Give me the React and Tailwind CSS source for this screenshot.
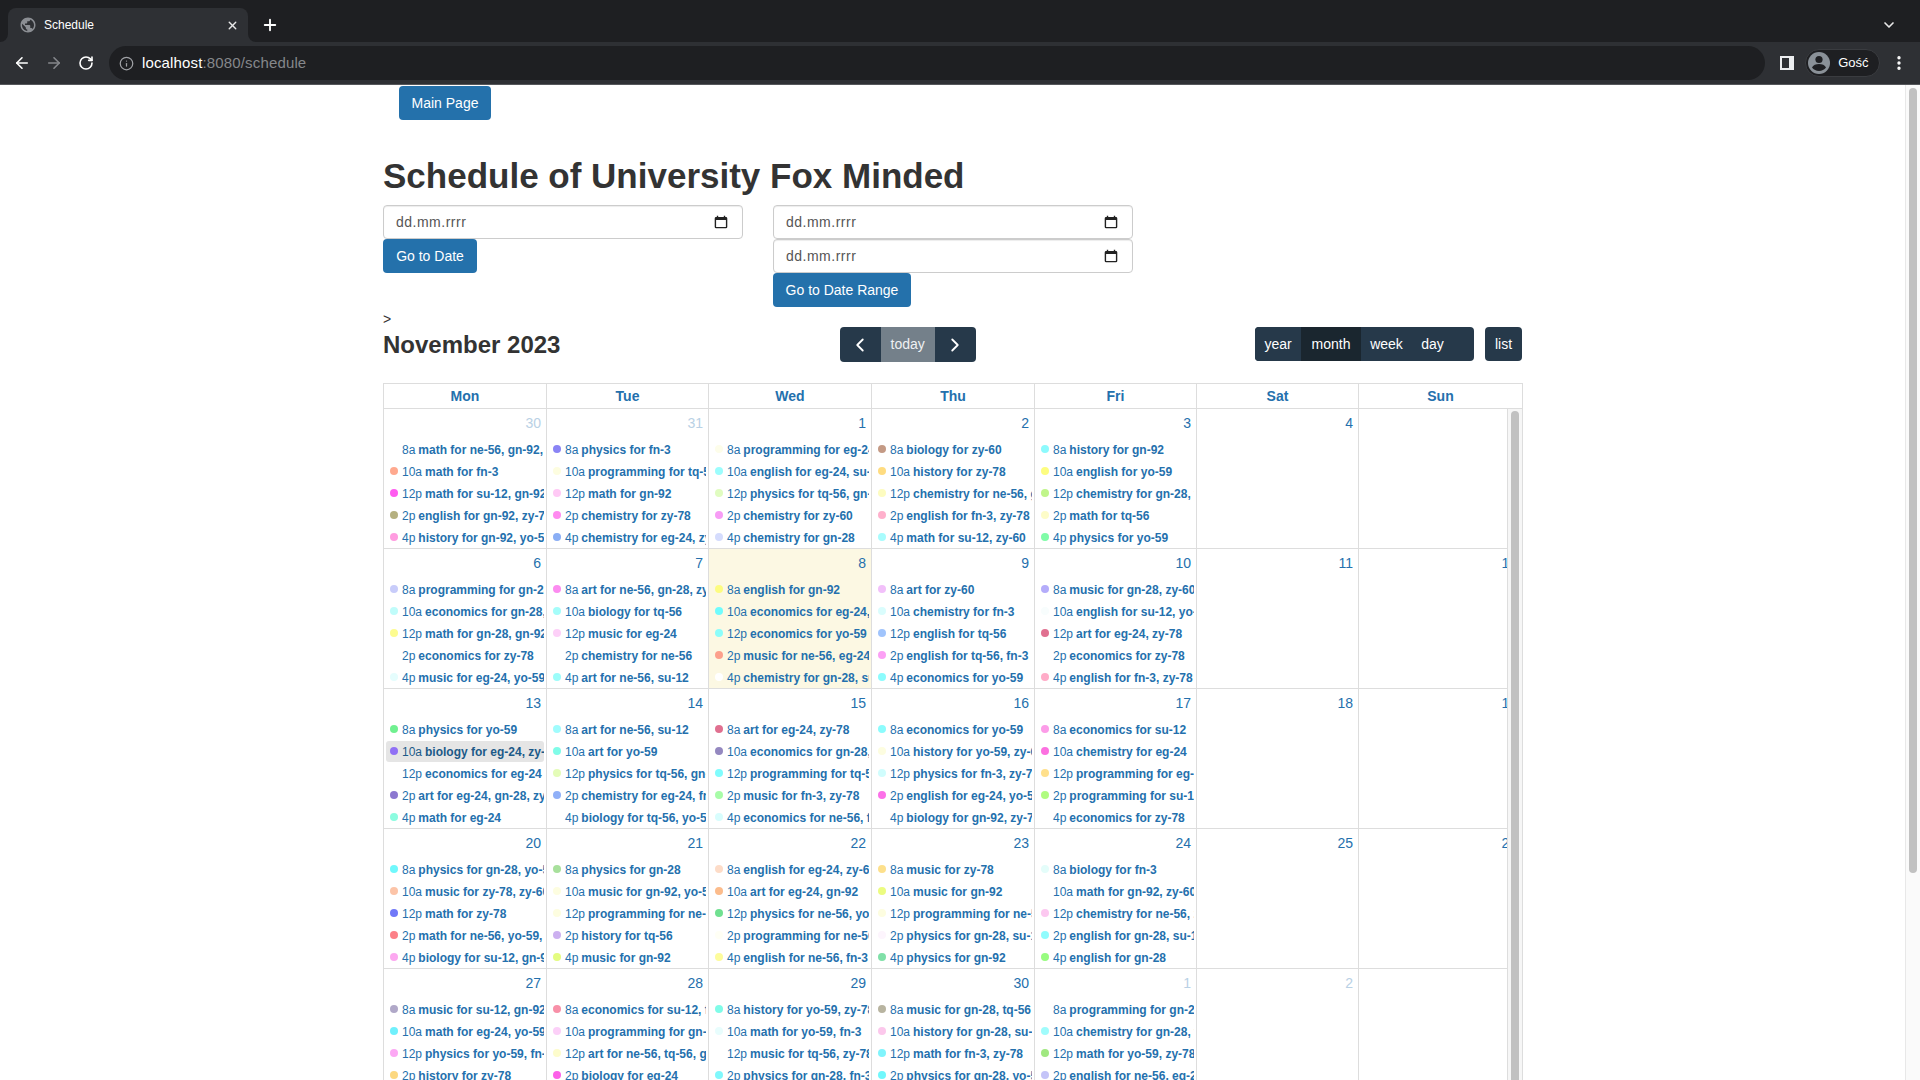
import { ArrowLeft, ArrowRight, ChevronDown, ChevronLeft, ChevronRight, EllipsisVertical, Info, Plus, RotateCw, X } from "lucide-react";
import { MdPublic } from "react-icons/md";

const TIMES = ["8a", "10a", "12p", "2p", "4p"];
const DAYS = ["Mon", "Tue", "Wed", "Thu", "Fri", "Sat", "Sun"];

// one entry per day: number, and events as [dot colour, title]
const WEEKS = [
  [
    { n: 30, muted: true, ev: [["#ffffff", "math for ne-56, gn-92, su-12"], ["#ffa98f", "math for fn-3"], ["#ff5cf0", "math for su-12, gn-92"], ["#b5b080", "english for gn-92, zy-78"], ["#ff9ce0", "history for gn-92, yo-59"]] },
    { n: 31, muted: true, ev: [["#8a84f5", "physics for fn-3"], ["#fdfde0", "programming for tq-56"], ["#ffc9f5", "math for gn-92"], ["#ff8af0", "chemistry for zy-78"], ["#8aaef5", "chemistry for eg-24, zy-78"]] },
    { n: 1, ev: [["#fdfdea", "programming for eg-24"], ["#9cfdfd", "english for eg-24, su-12"], ["#e0fcc0", "physics for tq-56, gn-28"], ["#f79cf5", "chemistry for zy-60"], ["#d5dcfd", "chemistry for gn-28"]] },
    { n: 2, ev: [["#c49a85", "biology for zy-60"], ["#ffdc80", "history for zy-78"], ["#fdfcc0", "chemistry for ne-56, gn-28"], ["#ffb0cc", "english for fn-3, zy-78"], ["#a8fcfd", "math for su-12, zy-60"]] },
    { n: 3, ev: [["#8dfafd", "history for gn-92"], ["#fdfd80", "english for yo-59"], ["#c0f58a", "chemistry for gn-28, yo-59"], ["#fdfcc8", "math for tq-56"], ["#80fca8", "physics for yo-59"]] },
    { n: 4, ev: [] },
    { n: 5, ev: [] },
  ],
  [
    { n: 6, ev: [["#c8ccfa", "programming for gn-28"], ["#c0fcfa", "economics for gn-28, su-12"], ["#fdfc90", "math for gn-28, gn-92"], ["#ffffff", "economics for zy-78"], ["#e5fdfd", "music for eg-24, yo-59"]] },
    { n: 7, ev: [["#fc8cf0", "art for ne-56, gn-28, zy-78"], ["#a5fdfa", "biology for tq-56"], ["#fdd0f8", "music for eg-24"], ["#ffffff", "chemistry for ne-56"], ["#9cfdfa", "art for ne-56, su-12"]] },
    { n: 8, today: true, ev: [["#fdfc80", "english for gn-92"], ["#70fcfd", "economics for eg-24, fn-3"], ["#8cfdfa", "economics for yo-59"], ["#fca08c", "music for ne-56, eg-24"], ["#ffffff", "chemistry for gn-28, su-12"]] },
    { n: 9, ev: [["#f2c0fa", "art for zy-60"], ["#dafdfd", "chemistry for fn-3"], ["#a0c4fc", "english for tq-56"], ["#fca0f5", "english for tq-56, fn-3"], ["#8cfcfd", "economics for yo-59"]] },
    { n: 10, ev: [["#b4acfa", "music for gn-28, zy-60"], ["#f8fdfd", "english for su-12, yo-59"], ["#e07090", "art for eg-24, zy-78"], ["#ffffff", "economics for zy-78"], ["#ffacc8", "english for fn-3, zy-78"]] },
    { n: 11, ev: [] },
    { n: 12, ev: [] },
  ],
  [
    { n: 13, ev: [["#70f090", "physics for yo-59"], ["#9070f5", "biology for eg-24, zy-78", true], ["#ffffff", "economics for eg-24"], ["#8c78d0", "art for eg-24, gn-28, zy-78"], ["#8cfce0", "math for eg-24"]] },
    { n: 14, ev: [["#a0fcfd", "art for ne-56, su-12"], ["#80fce8", "art for yo-59"], ["#e4fcb8", "physics for tq-56, gn-28"], ["#90b0f8", "chemistry for eg-24, fn-3"], ["#ffffff", "biology for tq-56, yo-59"]] },
    { n: 15, ev: [["#e07090", "art for eg-24, zy-78"], ["#9488c0", "economics for gn-28, su-12"], ["#80fcfd", "programming for tq-56"], ["#a8fca8", "music for fn-3, zy-78"], ["#d8fdfd", "economics for ne-56, fn-3"]] },
    { n: 16, ev: [["#8cfcfd", "economics for yo-59"], ["#fdfde0", "history for yo-59, zy-60"], ["#d0fdfd", "physics for fn-3, zy-78"], ["#fc70e8", "english for eg-24, yo-59"], ["#ffffff", "biology for gn-92, zy-78"]] },
    { n: 17, ev: [["#fc9ce8", "economics for su-12"], ["#fc70e0", "chemistry for eg-24"], ["#ffe08c", "programming for eg-24"], ["#b0fc80", "programming for su-12"], ["#ffffff", "economics for zy-78"]] },
    { n: 18, ev: [] },
    { n: 19, ev: [] },
  ],
  [
    { n: 20, ev: [["#70f8fc", "physics for gn-28, yo-59"], ["#fcc4a8", "music for zy-78, zy-60"], ["#7078f8", "math for zy-78"], ["#fc8088", "math for ne-56, yo-59, fn-3"], ["#fca8f0", "biology for su-12, gn-92"]] },
    { n: 21, ev: [["#a8e09c", "physics for gn-28"], ["#fdfde0", "music for gn-92, yo-59"], ["#fdfde0", "programming for ne-56"], ["#ccb0f0", "history for tq-56"], ["#e4fc80", "music for gn-92"]] },
    { n: 22, ev: [["#fddcc8", "english for eg-24, zy-60"], ["#fcbc8c", "art for eg-24, gn-92"], ["#70e090", "physics for ne-56, yo-59"], ["#fffff5", "programming for ne-56"], ["#fdfc9c", "english for ne-56, fn-3"]] },
    { n: 23, ev: [["#fde08c", "music for zy-78"], ["#ecfc80", "music for gn-92"], ["#fdfde0", "programming for ne-56"], ["#fdf5fd", "physics for gn-28, su-12"], ["#80e0a8", "physics for gn-92"]] },
    { n: 24, ev: [["#e4fdfa", "biology for fn-3"], ["#ffffff", "math for gn-92, zy-60"], ["#fcc8f0", "chemistry for ne-56, zy-78"], ["#90fcfd", "english for gn-28, su-12"], ["#98fc80", "english for gn-28"]] },
    { n: 25, ev: [] },
    { n: 26, ev: [] },
  ],
  [
    { n: 27, ev: [["#b0a8c8", "music for su-12, gn-92"], ["#70f0fc", "math for eg-24, yo-59"], ["#fca8f4", "physics for yo-59, fn-3"], ["#fcd880", "history for zy-78"]] },
    { n: 28, ev: [["#f890a8", "economics for su-12, fn-3"], ["#fcd0f8", "programming for gn-28"], ["#fdfccc", "art for ne-56, tq-56, gn-92"], ["#fc60e8", "biology for eg-24"]] },
    { n: 29, ev: [["#80fce8", "history for yo-59, zy-78"], ["#e8fdfd", "math for yo-59, fn-3"], ["#ffffff", "music for tq-56, zy-78"], ["#80f8fc", "physics for gn-28, fn-3"]] },
    { n: 30, ev: [["#b8b4a0", "music for gn-28, tq-56"], ["#fcc8ec", "history for gn-28, su-12"], ["#80f4fc", "math for fn-3, zy-78"], ["#70f8fc", "physics for gn-28, yo-59"]] },
    { n: 1, muted: true, ev: [["#ffffff", "programming for gn-28"], ["#a0fcfc", "chemistry for gn-28, fn-3"], ["#a0e880", "math for yo-59, zy-78"], ["#c4c4f8", "english for ne-56, eg-24"]] },
    { n: 2, muted: true, ev: [] },
    { n: 3, muted: true, ev: [] },
  ],
];

function BrowserChrome() {
  return (
    <div className="shrink-0 bg-[#1e1f22] text-white">
      {/* Tab strip */}
      <div className="h-[42px] flex items-end pl-[8px] pr-[23px]">
        <div className="relative w-[240px] h-[34px] bg-[#2e3034] rounded-t-[8px] flex items-center pl-[11px] pr-[9px]">
          <svg className="absolute left-[-8px] bottom-0" width="8" height="8" viewBox="0 0 8 8">
            <path d="M8 0v8H0a8 8 0 0 0 8-8z" fill="#2e3034" />
          </svg>
          <svg className="absolute right-[-8px] bottom-0" width="8" height="8" viewBox="0 0 8 8">
            <path d="M0 0v8h8a8 8 0 0 1-8-8z" fill="#2e3034" />
          </svg>
          <MdPublic size={18} className="text-[#8b8e93] shrink-0" />
          <span className="ml-[7px] text-[12px] flex-1">Schedule</span>
          <X size={13} strokeWidth={2.5} className="text-[#e8e8e8]" />
        </div>
        <Plus size={18} strokeWidth={2.5} className="ml-[13px] mb-[8px]" />
        <div className="flex-1" />
        <ChevronDown size={16} strokeWidth={2.5} className="mb-[9px] text-[#e8e8e8]" />
      </div>
      {/* Toolbar */}
      <div className="h-[43px] bg-[#2e3034] border-b border-[#55575b] flex items-center pl-[13px] pr-[12px]">
        <ArrowLeft size={18} strokeWidth={2.2} />
        <ArrowRight size={18} strokeWidth={2.2} className="ml-[14px] text-[#85878b]" />
        <RotateCw size={16} strokeWidth={2.4} className="ml-[15px]" />
        <div className="ml-[15px] w-[1658px] h-[34px] rounded-full bg-[#1e1f22] flex items-center pl-[10px]">
          <Info size={15} className="text-[#a0a2a6]" />
          <span className="ml-[8px] text-[15px] tracking-[0.15px]">
            localhost<span className="text-[#85878b]">:8080/schedule</span>
          </span>
        </div>
        <div className="ml-[15px] w-[14px] h-[14px] bg-[#eceef0] p-[2px] pr-[5px]">
          <div className="w-full h-full bg-[#2e3034]" />
        </div>
        <div className="ml-[11px] w-[75px] h-[28px] rounded-full bg-[#1e1f22] border border-[#3a3c40] flex items-center pl-[2px]">
          <svg width="22" height="22" viewBox="0 0 22 22">
            <circle cx="11" cy="11" r="11" fill="#8a9198" />
            <circle cx="11" cy="7.5" r="3.6" fill="#1e1f22" />
            <path d="M4 15.5c1-2.6 4-3.6 7-3.6s6 1 7 3.6c-1.6 2.2-4.2 3.6-7 3.6s-5.4-1.4-7-3.6z" fill="#1e1f22" />
          </svg>
          <span className="ml-[8px] text-[13px]">Gość</span>
        </div>
        <EllipsisVertical size={18} strokeWidth={2.5} className="ml-[10px]" />
      </div>
    </div>
  );
}

function DateField() {
  return (
    <div className="h-[34px] border border-[#ccc] rounded-[4px] bg-white flex items-center justify-between pl-[12px] pr-[14px] text-[14px] tracking-[0.5px] text-[#555] shadow-[inset_0_1px_1px_rgba(0,0,0,0.075)]">
      <span>dd.mm.rrrr</span>
      <svg width="14" height="14" viewBox="0 0 20 20" fill="#222">
        <path fillRule="evenodd" d="M4 1h2v2h8V1h2v2h1a2 2 0 0 1 2 2v12a2 2 0 0 1-2 2H3a2 2 0 0 1-2-2V5a2 2 0 0 1 2-2h1V1zM3 7v10h14V7H3z" />
      </svg>
    </div>
  );
}

function Event({ time, color, title, hovered }) {
  return (
    <div className={`h-[21px] mx-[2px] pl-[4px] rounded-[3px] flex items-center overflow-hidden whitespace-nowrap text-[12px] ${hovered ? "bg-[#e5e5e5] text-[#1c5a88]" : "text-[#2470ad]"}`}>
      <span className="w-[8px] h-[8px] rounded-full shrink-0 mb-[1px]" style={{ backgroundColor: color }} />
      <span className="ml-[4px] mr-[3px]">{time}</span>
      <span className="font-bold">{title}</span>
    </div>
  );
}

function DayCell({ day }) {
  return (
    <div className={`min-w-0 border-l border-[#ddd] ${day.today ? "bg-[#fcf8e3]" : ""}`}>
      <div className={`h-[30px] pt-[4px] pr-[5px] text-right text-[14px] leading-[20px] ${day.muted ? "text-[#b9d1e5]" : "text-[#2470ad]"}`}>
        {day.n}
      </div>
      <div className="flex flex-col gap-[1px]">
        {day.ev.map(([color, title, hovered], i) => (
          <Event key={i} time={TIMES[i]} color={color} title={title} hovered={hovered} />
        ))}
      </div>
    </div>
  );
}

function Calendar() {
  return (
    <div className="w-[1140px] border-t border-r border-[#ddd]">
      <div className="w-[1139px] grid grid-cols-[163px_162px_163px_163px_162px_162px_164px] h-[25px] border-b border-[#ddd] text-[14px] font-bold text-[#2470ad] text-center leading-[24px]">
        {DAYS.map((d) => (
          <div key={d} className="border-l border-[#ddd]">{d}</div>
        ))}
      </div>
      <div className="flex">
        <div className="w-[1124px] overflow-hidden">
          {WEEKS.map((week, i) => (
            <div key={i} className="w-[1139px] h-[140px] grid grid-cols-[163px_162px_163px_163px_162px_162px_164px] border-b border-[#ddd]">
              {week.map((day, j) => (
                <DayCell key={j} day={day} />
              ))}
            </div>
          ))}
        </div>
        <div className="w-[15px] bg-[#f6f6f6] border-l border-[#ddd] pl-[3px] pt-[2px]">
          <div className="w-[8px] h-[700px] rounded-full bg-[#c1c1c1]" />
        </div>
      </div>
    </div>
  );
}

export default function App() {
  const darkBtn = "h-full flex items-center justify-center bg-[#26394a] text-white";
  return (
    <div className="h-screen overflow-hidden flex flex-col bg-white text-[#333] font-['Liberation_Sans',Arial,sans-serif]">
      <BrowserChrome />
      <div className="flex-1 min-h-0 flex">
        <div className="flex-1 min-w-0 overflow-hidden">
          <div className="w-[1139px] mx-auto">
            <button className="mt-[1px] ml-[16px] h-[34px] w-[92px] rounded-[4px] bg-[#2471ab] text-white text-[14px]">Main Page</button>
            <h1 className="mt-[36px] mb-[9px] h-[40px] text-[35px] leading-[40px] font-bold">Schedule of University Fox Minded</h1>

            <div className="flex gap-[30px] h-[102px] items-start">
              <div className="w-[360px]">
                <DateField />
                <button className="block h-[34px] w-[94px] rounded-[4px] bg-[#2471ab] text-white text-[14px]">Go to Date</button>
              </div>
              <div className="w-[360px]">
                <DateField />
                <DateField />
                <button className="block h-[34px] w-[138px] rounded-[4px] bg-[#2471ab] text-white text-[14px]">Go to Date Range</button>
              </div>
            </div>

            <div className="h-[20px] text-[14px] leading-[24px]">&gt;</div>

            <div className="flex justify-between items-start h-[35px] mb-[21px]">
              <h2 className="text-[24px] leading-[35px] font-bold">November 2023</h2>
              <div className="flex h-[35px] rounded-[4px] overflow-hidden text-[14px]">
                <div className={`${darkBtn} w-[41px]`}><ChevronLeft size={22} strokeWidth={2} /></div>
                <div className="w-[54px] h-full flex items-center justify-center bg-[#74808a] text-[#eef0f2]">today</div>
                <div className={`${darkBtn} w-[41px]`}><ChevronRight size={22} strokeWidth={2} /></div>
              </div>
              <div className="flex h-[34px] text-[14px] gap-[11px]">
                <div className="flex h-full rounded-[4px] overflow-hidden bg-[#26394a] pr-[21px]">
                  <div className={`${darkBtn} w-[46px]`}>year</div>
                  <div className="w-[60px] h-full flex items-center justify-center bg-[#1a262f] text-white">month</div>
                  <div className={`${darkBtn} w-[51px]`}>week</div>
                  <div className={`${darkBtn} w-[41px]`}>day</div>
                </div>
                <div className={`${darkBtn} w-[37px] rounded-[4px]`}>list</div>
              </div>
            </div>

            <Calendar />
          </div>
        </div>
        {/* Page scrollbar */}
        <div className="w-[15px] shrink-0 bg-[#fafafa] border-l border-[#e8e8e8] pl-[3px] pt-[3px]">
          <div className="w-[8px] h-[785px] rounded-full bg-[#c1c1c1]" />
        </div>
      </div>
    </div>
  );
}
